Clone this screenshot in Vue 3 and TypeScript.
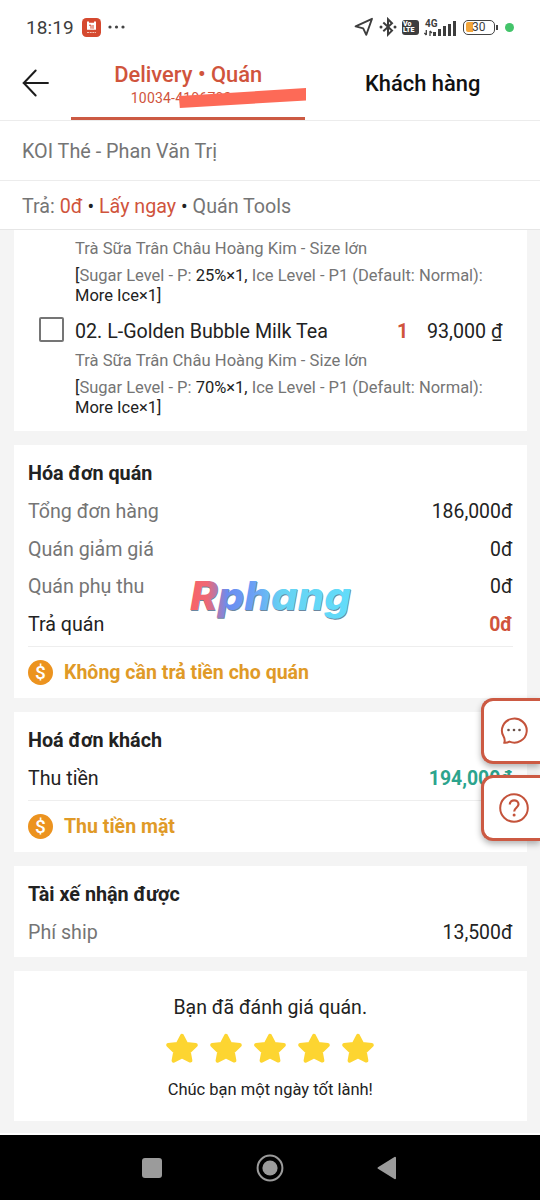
<script setup lang="ts">
interface BillRow {
  label: string
  value: string
  strong?: boolean
  tone?: string
}
interface Bill {
  title: string
  rows: BillRow[]
  notice?: string
  kind: string
}

const options = [
  { sugar: '25%×1,', ice: 'More Ice×1]' },
  { sugar: '70%×1,', ice: 'More Ice×1]' },
]

const bills: Bill[] = [
  {
    title: 'Hóa đơn quán',
    kind: 'store',
    rows: [
      { label: 'Tổng đơn hàng', value: '186,000đ' },
      { label: 'Quán giảm giá', value: '0đ' },
      { label: 'Quán phụ thu', value: '0đ' },
      { label: 'Trả quán', value: '0đ', strong: true, tone: 'red' },
    ],
    notice: 'Không cần trả tiền cho quán',
  },
  {
    title: 'Hoá đơn khách',
    kind: 'guest',
    rows: [{ label: 'Thu tiền', value: '194,000đ', strong: true, tone: 'green' }],
    notice: 'Thu tiền mặt',
  },
  {
    title: 'Tài xế nhận được',
    kind: 'driver',
    rows: [{ label: 'Phí ship', value: '13,500đ' }],
  },
]

const signalBars = [4, 7, 10, 12, 15]
</script>

<template>
  <div class="screen">
    <div class="status">
      <span class="clock">18:19</span>
      <svg class="app-icon" width="19" height="19" viewBox="0 0 19 19">
        <rect width="19" height="19" rx="4.5" fill="#d5492f" />
        <path d="M5 3.5h2v1.3h5V3.5h2v8.3H5z" fill="#fff" />
        <path d="M7 7.2h2v3.5M11 7v3.8" stroke="#d5492f" fill="none" />
        <path d="M5 14.5h9" stroke="#f5c6b8" stroke-dasharray="2 .7" />
      </svg>
      <svg class="more" width="18" height="4" viewBox="0 0 18 4" fill="#444">
        <circle cx="2" cy="2" r="1.6" /><circle cx="8.5" cy="2" r="1.6" /><circle cx="15" cy="2" r="1.6" />
      </svg>
      <svg class="locate" width="20" height="20" viewBox="0 0 20 20">
        <path d="M1.6 9.4 18 1.8 12.3 17.8 9.2 11.3z" fill="none" stroke="#3d3d3d" stroke-width="1.9" stroke-linejoin="round" />
      </svg>
      <svg class="bluetooth" width="18" height="20" viewBox="0 0 18 20">
        <path d="M4.3 5.6 13 13.6 9 17.6V2.2l4 4-8.7 8" fill="none" stroke="#3d3d3d" stroke-width="2" />
        <circle cx="2" cy="10" r="1.5" fill="#3d3d3d" /><circle cx="16" cy="10" r="1.5" fill="#3d3d3d" />
      </svg>
      <span class="volte"><span>Vo</span><span>LTE</span></span>
      <div class="cell">
        <div class="cell-side">
          <span class="gen">4G</span>
          <svg width="9" height="6" viewBox="0 0 9 6">
            <path d="M2.3 0v5M.4 3l1.9 2.2M6 6V1M7.9 3 6 .8" fill="none" stroke="#3d3d3d" stroke-width="1.3" />
          </svg>
        </div>
        <div class="bars">
          <i v-for="h in signalBars" :key="h" :style="{ height: h + 'px' }"></i>
        </div>
      </div>
      <div class="battery"><span class="charge"></span><span class="percent">30</span></div>
      <span class="nub"></span>
      <span class="privacy-dot"></span>
    </div>

    <header class="tabs">
      <svg class="back" width="28" height="28" viewBox="0 0 28 28">
        <path d="M26 14H1.5M13.7 1.5 1.8 14l11.9 12.5" fill="none" stroke="#1c1c1c" stroke-width="2" stroke-linecap="round" stroke-linejoin="round" />
      </svg>
      <div class="tab active">
        <div class="tab-title">Delivery • Quán</div>
        <div class="tab-code">10034-4106702</div>
        <svg class="strike" width="127" height="20" viewBox="0 0 127 20">
          <path d="M0 8 127 0v12.5L.8 20z" fill="#fd6a57" />
        </svg>
      </div>
      <div class="tab other">Khách hàng</div>
    </header>

    <div class="store-name"><span>KOI Thé - Phan Văn Trị</span></div>
    <div class="pay-line">
      <span>Trả: <b>0đ</b> <i>•</i> <b>Lấy ngay</b> <i>•</i> Quán Tools</span>
    </div>

    <main class="content">
      <section class="card items">
        <template v-for="(o, index) in options" :key="index">
          <div v-if="index > 0" class="item-head">
            <span class="checkbox"></span>
            <span class="item-name">02. L-Golden Bubble Milk Tea</span>
            <span class="qty">1</span>
            <span class="price">93,000 ₫</span>
          </div>
          <div class="sub">Trà Sữa Trân Châu Hoàng Kim - Size lớn</div>
          <div class="opts">
            <div><b>[</b>Sugar Level - P: <b>{{ o.sugar }}</b> Ice Level - P1 (Default: Normal):</div>
            <div><b>{{ o.ice }}</b></div>
          </div>
        </template>
      </section>

      <section v-for="bill in bills" :key="bill.kind" class="card bill" :class="bill.kind">
        <h2>{{ bill.title }}</h2>
        <div v-for="row in bill.rows" :key="row.label" class="row" :class="{ strong: row.strong }">
          <span>{{ row.label }}</span>
          <span class="value" :class="row.tone">{{ row.value }}</span>
        </div>
        <div v-if="bill.notice" class="notice">
          <span class="coin">$</span>
          <span>{{ bill.notice }}</span>
        </div>
      </section>

      <section class="card rating">
        <p class="rated">Bạn đã đánh giá quán.</p>
        <div class="stars">
          <svg v-for="n in 5" :key="n" width="34" height="32" viewBox="0 0 34 32">
            <path d="M17 3.8 21.2 11.9 30.8 13 23.8 19.8 25.4 28.6 17 24.5 8.6 28.6 10.2 19.8 3.2 13 12.8 11.9z" fill="#fdd531" stroke="#fdd531" stroke-width="4" stroke-linejoin="round" />
          </svg>
        </div>
        <p class="wish">Chúc bạn một ngày tốt lành!</p>
      </section>
    </main>

    <nav class="system-nav">
      <svg width="20" height="20" viewBox="0 0 20 20"><rect width="20" height="20" rx="3" fill="#9b9b9b" /></svg>
      <svg width="28" height="28" viewBox="0 0 28 28">
        <circle cx="14" cy="14" r="12.4" fill="none" stroke="#9b9b9b" stroke-width="2" />
        <circle cx="14" cy="14" r="7.6" fill="#9b9b9b" />
      </svg>
      <svg width="20" height="24" viewBox="0 0 20 24"><path d="M1.5 12 18 1.8v20.4z" fill="#9b9b9b" stroke="#9b9b9b" stroke-width="2" stroke-linejoin="round" /></svg>
    </nav>

    <svg class="watermark" width="176" height="70" viewBox="0 0 176 70">
      <defs>
        <linearGradient id="brand" gradientUnits="userSpaceOnUse" x1="0" y1="0" x2="165" y2="0">
          <stop offset="0" stop-color="#fb6262" />
          <stop offset=".13" stop-color="#ee6876" />
          <stop offset=".25" stop-color="#6b8cf0" />
          <stop offset=".4" stop-color="#6b9ff5" />
          <stop offset=".58" stop-color="#67d3f3" />
          <stop offset="1" stop-color="#62dcfa" />
        </linearGradient>
      </defs>
      <g class="brand-text">
        <text x="4.6" y="46.8" textLength="161" lengthAdjust="spacingAndGlyphs" fill="#6b87a0">Rphang</text>
        <text x="4" y="46" textLength="161" lengthAdjust="spacingAndGlyphs" fill="url(#brand)">Rphang</text>
      </g>
    </svg>

    <div class="floaters">
      <div class="floater">
        <svg width="30" height="30" viewBox="0 0 30 30">
          <path d="M4.6 20.6A12.4 12 0 1 1 10.4 25.6C8.8 26.6 7 27 5.2 26.8 6 25 5.8 22.8 4.6 20.6z" fill="none" stroke="#c4533b" stroke-width="2" stroke-linejoin="round" />
          <g fill="#6a5048"><circle cx="9.5" cy="14" r="1.3" /><circle cx="15" cy="14" r="1.3" /><circle cx="20.5" cy="14" r="1.3" /></g>
        </svg>
      </div>
      <div class="floater">
        <svg width="30" height="30" viewBox="0 0 30 30" fill="none" stroke="#c4533b">
          <circle cx="15" cy="15" r="13.8" stroke-width="2" />
          <path d="M10.8 11.5c0-5.6 8.7-5.3 8.7-.3 0 3.6-4.3 3.5-4.3 7.3" stroke-width="2.2" />
          <circle cx="15.1" cy="22" r="1.5" fill="#c4533b" stroke="none" />
        </svg>
      </div>
    </div>
  </div>
</template>

<style>
body { margin: 0; background: #fff; }
</style>

<style scoped>
.screen {
  position: relative;
  width: 540px;
  height: 1200px;
  overflow: hidden;
  display: flex;
  flex-direction: column;
  background: #fff;
  color: #222;
  font-family: Roboto, "Noto Sans", sans-serif;
  font-size: 19.65px;
}
.status {
  height: 54px;
  box-sizing: border-box;
  padding-left: 26px;
  display: flex;
  align-items: center;
  flex: none;
  color: #3d3d3d;
}
.clock { width: 56px; font-size: 19px; letter-spacing: 0.1px; }
.more { margin-left: 7px; }
.locate { margin-left: 228px; }
.bluetooth { margin-left: 5px; }
.volte {
  width: 17px;
  height: 15px;
  margin-left: 5px;
  border-radius: 3px;
  background: #3d3d3d;
  color: #fff;
  display: flex;
  flex-direction: column;
  justify-content: center;
  padding-left: 1px;
  box-sizing: border-box;
  font-size: 7px;
  line-height: 6.5px;
  font-weight: 900;
}
.cell { width: 33px; height: 17px; margin-left: 5px; display: flex; align-items: flex-end; }
.cell-side { width: 9px; height: 17px; position: relative; display: flex; flex-direction: column; justify-content: space-between; }
.gen { font-size: 10px; line-height: 9px; font-weight: 700; margin-left: 1px; }
.bars { display: flex; align-items: flex-end; gap: 2px; width: 24px; }
.bars i { width: 3px; background: #3d3d3d; }
.battery {
  width: 32px;
  height: 15px;
  margin-left: 6px;
  border: 1.5px solid #444;
  border-radius: 5px;
  box-sizing: border-box;
  display: flex;
  align-items: center;
  padding-left: 2px;
}
.charge { width: 7px; height: 10px; background: #f2a53a; border-radius: 2px 0 0 2px; }
.percent { font-size: 12px; margin-left: -1px; }
.nub { width: 2px; height: 5px; background: #444; margin-left: 1px; }
.privacy-dot { width: 9px; height: 9px; border-radius: 50%; background: #43c46a; margin-left: 7px; }

.tabs {
  height: 67px;
  flex: none;
  box-sizing: border-box;
  border-bottom: 1px solid #ececec;
  display: flex;
}
.back { margin: 15px 0 0 22px; }
.tab { box-sizing: border-box; text-align: center; }
.tab.active { position: relative; width: 235px; height: 66px; margin-left: 21px; border-bottom: 3px solid #cc5a43; color: #d0543c; }
.tab-title { font-size: 21.9px; line-height: 26px; padding-top: 8px; font-weight: 500; }
.tab-code { font-size: 14px; line-height: 18px; padding-top: 1px; letter-spacing: 0.2px; margin-right: 14px; }
.strike { position: absolute; left: 108px; top: 34px; }
.tab.other { width: 235px; line-height: 60px; font-size: 21.9px; font-weight: 500; color: #111; }

.store-name { height: 60px; flex: none; box-sizing: border-box; border-bottom: 1px solid #ececec; padding-left: 22px; line-height: 61px; font-size: 19.8px; color: #757575; }
.pay-line { height: 49px; flex: none; box-sizing: border-box; border-bottom: 1px solid #e6e6e6; padding-left: 22px; line-height: 51px; font-size: 19.7px; color: #757575; }
.pay-line b { font-weight: 400; color: #d0543c; }
.pay-line i { font-style: normal; color: #222; }

.content {
  height: 905px;
  flex: none;
  box-sizing: border-box;
  padding: 0 14px;
  background: #f4f4f4;
  border-bottom: 2px solid #fff;
  display: flex;
  flex-direction: column;
  gap: 14px;
}
.card { width: 512.5px; box-sizing: border-box; background: #fff; }
.items { height: 201px; padding: 9px 24px 0; }
.item-head { height: 28px; margin: 11px 0 6px; display: flex; align-items: center; }
.checkbox { width: 25px; height: 25px; box-sizing: border-box; border: 2.5px solid #757575; border-radius: 2px; margin: -4px 11px 0 1px; }
.item-name { width: 322px; }
.qty { color: #d0543c; font-weight: 700; width: 30px; }
.price { white-space: nowrap; }
.sub { padding-left: 37px; font-size: 16.6px; line-height: 20px; color: #757575; }
.opts { padding: 7px 0 0 37px; font-size: 16.5px; line-height: 20px; color: #757575; white-space: nowrap; }
.opts b { font-weight: 400; color: #222; }

.bill { padding: 10px 14px 0; }
.bill.store { height: 253px; }
.bill.guest { height: 140px; }
.bill.driver { height: 91px; }
.bill h2 { margin: 0; font-size: 19.75px; line-height: 38px; font-weight: 700; }
.row { display: flex; justify-content: space-between; height: 37.5px; line-height: 37.5px; color: #757575; }
.row.strong { color: #222; }
.value { color: #222; font-size: 19.4px; }
.value.red { color: #d0543c; font-weight: 700; }
.value.green { color: #2ca48d; font-weight: 700; }
.notice { margin-top: 2.5px; border-top: 1px solid #eee; height: 51px; display: flex; align-items: center; gap: 11px; font-size: 19.55px; color: #e09a27; font-weight: 700; }
.coin { width: 25px; height: 25px; border-radius: 50%; background: #ec931f; color: #fff; text-align: center; line-height: 25px; font-size: 19px; font-weight: 500; }
.guest .notice { height: 50px; }

.rating { height: 150px; display: flex; flex-direction: column; align-items: center; }
.rating p { margin: 0; }
.rated { padding-top: 24px; line-height: 25px; font-size: 19.5px; }
.stars { display: flex; gap: 10px; margin-top: 12px; height: 32px; }
.wish { font-size: 16.5px; line-height: 20px; padding-top: 16px; }

.system-nav { height: 65px; background: #000; display: flex; align-items: center; justify-content: space-between; padding: 0 143px 0 142px; box-sizing: border-box; }

.watermark { position: absolute; left: 186px; top: 564px; }
.brand-text { font-family: Inter, sans-serif; font-weight: 800; font-style: italic; font-size: 39px; }
.floaters { position: absolute; right: 0; top: 698px; display: flex; flex-direction: column; gap: 11px; }
.floater { width: 59px; height: 66px; box-sizing: border-box; border: 3px solid #cc5a43; border-right: 0; border-radius: 12px 0 0 12px; background: #fff; box-shadow: 0 3px 6px rgba(0, 0, 0, 0.3); display: flex; align-items: center; padding-left: 15px; }
</style>
